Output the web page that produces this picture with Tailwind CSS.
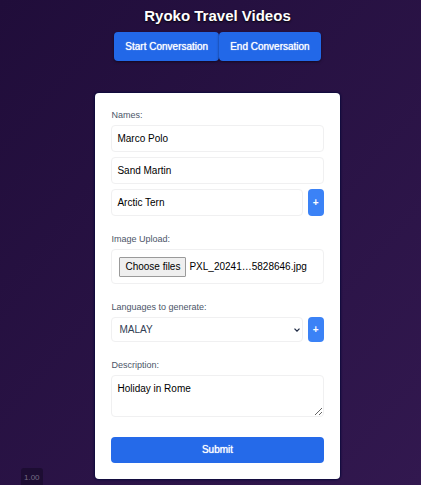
<!DOCTYPE html>
<html lang="en">
<head>
<meta charset="utf-8">
<meta name="viewport" content="width=device-width, initial-scale=1">
<title>Ryoko Travel Videos</title>
<script src="https://cdn.jsdelivr.net/npm/@tailwindcss/browser@4"></script>
</head>
<body class="min-h-screen bg-linear-to-br from-[#200d3a] to-[#32184f] font-['Liberation_Sans',Arial,sans-serif] text-[10px] leading-3">
<main class="flex flex-col items-center pt-1.5 pb-1.5 pl-3.5">
  <h1 class="text-[15px] leading-5 font-bold text-white text-shadow-[0_1px_2px_#000000]">Ryoko Travel Videos</h1>
  <div class="mt-1.5 flex">
    <button type="button" class="rounded-[4px] bg-[#2268e8] px-[11px] py-2 leading-[13px] text-white shadow-sm shadow-black/40 text-shadow-[0_0_1px_#ffffff]">Start Conversation</button>
    <button type="button" class="rounded-[4px] bg-[#2268e8] px-[11px] py-2 leading-[13px] text-white shadow-sm shadow-black/40 text-shadow-[0_0_1px_#ffffff]">End Conversation</button>
  </div>

  <form class="mt-8 flex w-3/5 min-w-[200px] max-w-md flex-col rounded-[4px] bg-white p-4 shadow-[0_0_2px_1px_#0c0a3c]">
    <fieldset class="mb-[17px] flex flex-col gap-[5px]">
      <legend class="mb-1 text-[9px] text-[#4b5568]">Names:</legend>
      <input type="text" aria-label="Name 1" value="Marco Polo" class="h-[27px] w-full rounded-[4px] border border-[#f0f0f1] px-[5px] text-black">
      <input type="text" aria-label="Name 2" value="Sand Martin" class="h-[27px] w-full rounded-[4px] border border-[#f0f0f1] px-[5px] text-black">
      <div class="flex gap-[5px]">
        <input type="text" aria-label="Name 3" value="Arctic Tern" class="h-[27px] min-w-0 flex-1 rounded-[4px] border border-[#f0f0f1] px-[5px] text-black">
        <button type="button" aria-label="Add name" class="w-4 rounded-[4px] bg-[#3b82f6] text-[10px] font-bold text-white">+</button>
      </div>
    </fieldset>

    <div class="mb-[17px] flex flex-col gap-1">
      <label for="images" class="text-[9px] text-[#4b5568]">Image Upload:</label>
      <label for="images" class="relative flex h-[35px] items-center gap-[3px] rounded-[4px] border border-[#f0f0f1] px-[7px] text-black">
        <input id="images" type="file" multiple class="sr-only">
        <span class="shrink-0 rounded-[1px] border border-[#9a9a9a] bg-[#efefef] px-[5px] py-[3px]">Choose files</span>
        <span class="truncate">PXL_20241…5828646.jpg</span>
      </label>
    </div>

    <div class="mb-[17px] flex flex-col gap-1">
      <label for="language" class="text-[9px] text-[#4b5568]">Languages to generate:</label>
      <div class="flex h-[25px] gap-[5px]">
        <div class="relative min-w-0 flex-1">
          <select id="language" class="h-full w-full appearance-none rounded-[4px] border border-[#f0f0f1] bg-white pl-[7px] text-[#334155]"><option>MALAY</option></select>
          <svg class="pointer-events-none absolute top-1/2 right-[3px] h-1 w-1.5 -translate-y-1/2" viewBox="0 0 6 4" fill="none" stroke="#1e2a44" stroke-width="1.3"><path d="M.5.6 3 3.1 5.5.6"/></svg>
        </div>
        <button type="button" aria-label="Add language" class="w-4 rounded-[4px] bg-[#3b82f6] text-[10px] font-bold text-white">+</button>
      </div>
    </div>

    <div class="mb-5 flex flex-col gap-1">
      <label for="description" class="text-[9px] text-[#4b5568]">Description:</label>
      <textarea id="description" rows="2" class="h-[42px] w-full resize-y rounded-[4px] border border-[#f0f0f1] px-[5px] py-[7px] text-black">Holiday in Rome</textarea>
    </div>

    <button type="submit" class="h-[26px] rounded-[4px] bg-[#256ae9] text-white text-shadow-[0_0_1px_#ffffff]">Submit</button>
  </form>
</main>
<div class="fixed bottom-0 left-[21px] rounded-t-[3px] bg-[#1d0d33] px-[3px] pt-1 pb-px text-[8px] text-[#756a85]">1.00</div>
</body>
</html>
